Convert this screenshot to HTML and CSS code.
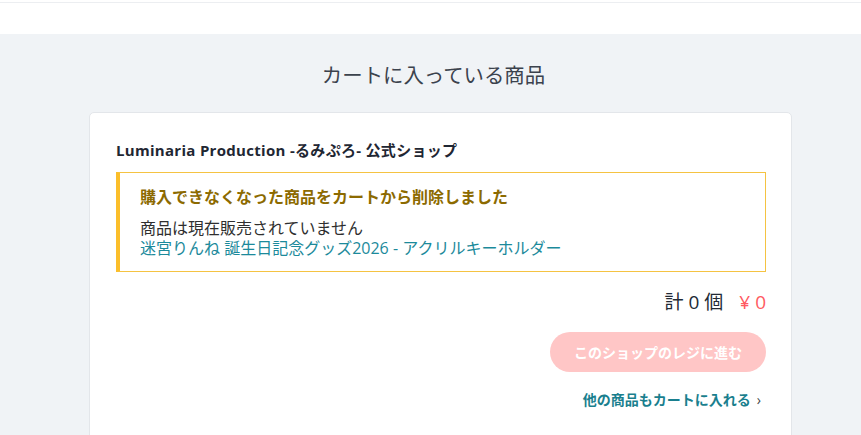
FILE: index.html
```html
<!DOCTYPE html>
<html lang="ja">
<head>
<meta charset="utf-8">
<link rel="stylesheet" href="styles.css">
</head>
<body>
<div class="topgap"></div>
<header class="header"></header>
<main class="main">
  <h1 class="title">カートに入っている商品</h1>
  <section class="card">
    <h2 class="shop">Luminaria Production -るみぷろ- 公式ショップ</h2>
    <div class="alert">
      <p class="alert-title">購入できなくなった商品をカートから削除しました</p>
      <p class="alert-text">商品は現在販売されていません</p>
      <a class="alert-link" href="#">迷宮りんね 誕生日記念グッズ2026 - アクリルキーホルダー</a>
    </div>
    <div class="total">
      <span class="count">計 0 個</span>
      <span class="price">¥ 0</span>
    </div>
    <div class="actions">
      <button class="checkout" type="button">このショップのレジに進む</button>
      <a class="more" href="#">他の商品もカートに入れる<span class="chev">›</span></a>
    </div>
  </section>
</main>
</body>
</html>
```
FILE: styles.css
```css
* { box-sizing: border-box; }
html, body { margin: 0; padding: 0; }
body {
  font-family: "Open Sans", "Noto Sans CJK JP", sans-serif;
  background: #f0f3f6;
  color: #333;
  overflow: hidden;
  height: 435px;
}
.topgap { height: 2px; background: #fff; }
.header {
  height: 32px;
  background: #fff;
  border-top: 1px solid #eceef1;
}
.main {
  padding-top: 22px;
}
.title {
  margin: 0;
  text-align: center;
  font-size: 20.4px;
  line-height: 38px;
  font-weight: 400;
  color: #3b424d;
  padding-left: 6px;
}
.card {
  width: 703px;
  margin: 18px 0 0 89px;
  background: #fff;
  border: 1px solid #e3e6ea;
  border-radius: 5px;
  padding: 26px 25px 40px 26px;
  min-height: 340px;
}
.shop {
  margin: 0;
  font-size: 15px;
  line-height: 22px;
  font-weight: 700;
  color: #1f2733;
  letter-spacing: 0.3px;
}
.alert {
  margin-top: 11px;
  border: 1px solid #f5c342;
  border-left: 4px solid #fbbe2a;
  padding: 12px 20px 13px 20px;
}
.alert p { margin: 0; }
.alert-title {
  font-size: 16px;
  line-height: 24px;
  font-weight: 700;
  color: #8c6a00;
  margin-bottom: 9px !important;
}
.alert-text {
  font-size: 16px;
  line-height: 20px;
  color: #2f2f2f;
}
.alert-link {
  display: block;
  font-size: 16px;
  line-height: 20px;
  color: #1c8a9b;
  text-decoration: none;
}
.total {
  margin-top: 17px;
  display: flex;
  justify-content: flex-end;
  align-items: center;
  gap: 16px;
  line-height: 26px;
}
.count {
  font-size: 19px;
  color: #222a35;
}
.price {
  font-size: 19px;
  color: #ff5a62;
}
.actions {
  display: flex;
  flex-direction: column;
  align-items: flex-end;
}
.checkout {
  margin-top: 17px;
  width: 216px;
  height: 40px;
  border: none;
  border-radius: 20px;
  background: #ffc6c6;
  color: #fff;
  font-family: "Open Sans", "Noto Sans CJK JP", sans-serif;
  font-size: 14px;
  font-weight: 700;
}
.more {
  margin-top: 18px;
  margin-right: 5px;
  font-size: 14px;
  line-height: 20px;
  font-weight: 700;
  color: #1a7f8e;
  text-decoration: none;
}
.chev {
  font-weight: 400;
  color: #444;
  margin-left: 6px;
  font-size: 14px;
}
```
